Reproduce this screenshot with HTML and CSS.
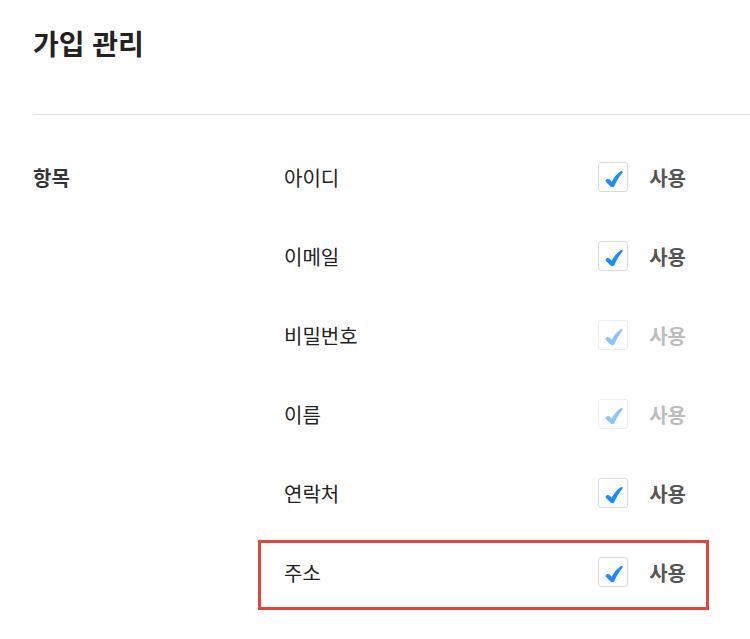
FILE: index.html
```html
<!DOCTYPE html>
<html lang="ko">
<head>
<meta charset="utf-8">
<link rel="stylesheet" href="styles.css">
</head>
<body>
<div class="page">
  <header class="header">
    <h1 class="title">가입 관리</h1>
  </header>
  <section class="section">
    <div class="section-label">항목</div>
    <ul class="rows">
      <li class="row"><span class="name">아이디</span><span class="check"><svg viewBox="0 0 20 20"><path d="M0.8 11.5 C1.8 9.8 4 9.4 5.4 10.8 L7.4 13 C9.8 8.2 13.2 4.2 17.4 1.3 C19 0.4 20.3 2 19.2 3.3 C15.4 7.8 12.6 12.3 10.6 17.6 C9.8 19.5 7.4 19.7 6.2 18.3 L1.2 13.4 C0.6 12.8 0.5 12.1 0.8 11.5 Z"/></svg></span><span class="use">사용</span></li>
      <li class="row"><span class="name">이메일</span><span class="check"><svg viewBox="0 0 20 20"><path d="M0.8 11.5 C1.8 9.8 4 9.4 5.4 10.8 L7.4 13 C9.8 8.2 13.2 4.2 17.4 1.3 C19 0.4 20.3 2 19.2 3.3 C15.4 7.8 12.6 12.3 10.6 17.6 C9.8 19.5 7.4 19.7 6.2 18.3 L1.2 13.4 C0.6 12.8 0.5 12.1 0.8 11.5 Z"/></svg></span><span class="use">사용</span></li>
      <li class="row is-disabled"><span class="name">비밀번호</span><span class="check"><svg viewBox="0 0 20 20"><path d="M0.8 11.5 C1.8 9.8 4 9.4 5.4 10.8 L7.4 13 C9.8 8.2 13.2 4.2 17.4 1.3 C19 0.4 20.3 2 19.2 3.3 C15.4 7.8 12.6 12.3 10.6 17.6 C9.8 19.5 7.4 19.7 6.2 18.3 L1.2 13.4 C0.6 12.8 0.5 12.1 0.8 11.5 Z"/></svg></span><span class="use">사용</span></li>
      <li class="row is-disabled"><span class="name">이름</span><span class="check"><svg viewBox="0 0 20 20"><path d="M0.8 11.5 C1.8 9.8 4 9.4 5.4 10.8 L7.4 13 C9.8 8.2 13.2 4.2 17.4 1.3 C19 0.4 20.3 2 19.2 3.3 C15.4 7.8 12.6 12.3 10.6 17.6 C9.8 19.5 7.4 19.7 6.2 18.3 L1.2 13.4 C0.6 12.8 0.5 12.1 0.8 11.5 Z"/></svg></span><span class="use">사용</span></li>
      <li class="row"><span class="name">연락처</span><span class="check"><svg viewBox="0 0 20 20"><path d="M0.8 11.5 C1.8 9.8 4 9.4 5.4 10.8 L7.4 13 C9.8 8.2 13.2 4.2 17.4 1.3 C19 0.4 20.3 2 19.2 3.3 C15.4 7.8 12.6 12.3 10.6 17.6 C9.8 19.5 7.4 19.7 6.2 18.3 L1.2 13.4 C0.6 12.8 0.5 12.1 0.8 11.5 Z"/></svg></span><span class="use">사용</span></li>
      <li class="row is-highlight"><span class="name">주소</span><span class="check"><svg viewBox="0 0 20 20"><path d="M0.8 11.5 C1.8 9.8 4 9.4 5.4 10.8 L7.4 13 C9.8 8.2 13.2 4.2 17.4 1.3 C19 0.4 20.3 2 19.2 3.3 C15.4 7.8 12.6 12.3 10.6 17.6 C9.8 19.5 7.4 19.7 6.2 18.3 L1.2 13.4 C0.6 12.8 0.5 12.1 0.8 11.5 Z"/></svg></span><span class="use">사용</span></li>
    </ul>
  </section>
</div>
</body>
</html>
```
FILE: styles.css
```css
* { box-sizing: border-box; }
html, body { margin: 0; padding: 0; background: #fff; }
body {
  font-family: "Noto Sans CJK KR", "Noto Sans", sans-serif;
  color: #222;
  overflow: hidden;
}
.page { padding-left: 33px; }
.header {
  padding-top: 25px;
  padding-bottom: 53px;
  border-bottom: 1px solid #e2e2e2;
}
.title {
  margin: 0;
  font-size: 28px;
  line-height: 36px;
  font-weight: 700;
  color: #222;
}
.section {
  display: flex;
  padding-top: 24px;
}
.section-label {
  width: 225px;
  flex: none;
  height: 76px;
  display: flex;
  align-items: center;
  font-size: 20px;
  font-weight: 700;
  color: #333;
}
.rows {
  list-style: none;
  margin: 0;
  padding: 0;
  width: 451px;
  display: flex;
  flex-direction: column;
  gap: 3px;
}
.row {
  height: 76px;
  display: flex;
  align-items: center;
  padding: 0 20px 0 23px;
  border: 3px solid transparent;
  font-size: 20px;
}
.row.is-highlight {
  border-color: #e2453c;
  margin-top: 6px;
  height: 70px;
  padding-bottom: 6px;
}
.name { flex: 1; color: #222; }
.check {
  width: 30px;
  height: 30px;
  border: 1px solid #dcdcdc;
  border-radius: 3px;
  background: #fff;
  display: flex;
  align-items: flex-end;
  justify-content: center;
  padding: 0 0 3px 2px;
  margin-right: 21px;
}
.check svg { width: 18px; height: 18px; fill: #1a8cff; display: block; }
.use { font-weight: 700; color: #555; }
.is-disabled .check { border-color: #eeeeee; }
.is-disabled .check svg { fill: #8cc4fb; }
.is-disabled .use { color: #bdbdbd; }
```
